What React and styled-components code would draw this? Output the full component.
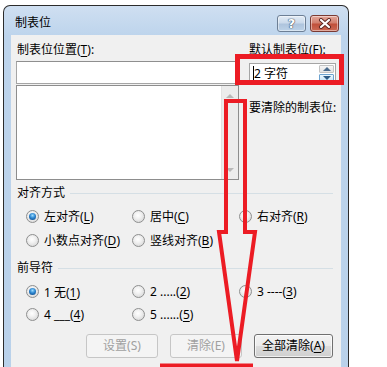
import React from "react";
import styled, { createGlobalStyle } from "styled-components";

const Global = createGlobalStyle`
  html, body { margin: 0; padding: 0; background: #fff; }
  body {
    font-family: "Noto Sans", "Noto Sans CJK SC", "Microsoft YaHei", sans-serif;
    font-size: 12px;
    color: #000;
    overflow: hidden;
  }
`;

const Page = styled.div`
  position: relative;
  width: 387px;
  height: 367px;
  overflow: hidden;
  box-sizing: border-box;
  padding: 5px 0 0 3px;
`;

const Window = styled.div`
  width: 346px;
  height: 400px;
  box-sizing: border-box;
  border: 1px solid #2c2c2c;
  border-bottom: none;
  border-radius: 7px 7px 0 0;
  background: linear-gradient(180deg, #cfdff1 0px, #bdd4ec 30px, #b9d1ea 100%);
  display: flex;
  flex-direction: column;
`;

const TitleBar = styled.div`
  height: 29px;
  box-sizing: border-box;
  padding: 5px 9px 0 11px;
  display: flex;
  align-items: center;
  flex: none;
`;

const Caption = styled.div`
  flex: 1;
  font-size: 12px;
  line-height: 16px;
  color: #000;
`;

const CaptionButtons = styled.div`
  display: flex;
  gap: 4px;
  margin-top: 1px;
`;

const CapButton = styled.div`
  width: 29px;
  height: 17px;
  box-sizing: border-box;
  border-radius: 3px;
  border: 1px solid ${(p) => (p.$close ? "#7a3a33" : "#6d7f95")};
  background: ${(p) =>
    p.$close
      ? "linear-gradient(180deg, #e4a79b 0%, #d3806f 45%, #c1503b 55%, #cc6a55 100%)"
      : "linear-gradient(180deg, #e3ecf6 0%, #cbdaeb 45%, #aec4dd 55%, #bcd2e8 100%)"};
  box-shadow: inset 0 0 0 1px rgba(255, 255, 255, 0.45);
  display: flex;
  align-items: center;
  justify-content: center;
`;

const HelpGlyph = styled.span`
  font-family: "DejaVu Sans", sans-serif;
  font-weight: bold;
  font-size: 13px;
  line-height: 13px;
  color: #fff;
  text-shadow: 0 0 1px #3c4d63, 0 0 1px #3c4d63, 0 0 1px #3c4d63;
`;

const Client = styled.div`
  flex: 1;
  margin: 0 7px;
  background: #f0f0f0;
  box-sizing: border-box;
  padding: 6px 8px 0 5px;
  display: flex;
  flex-direction: column;
`;

const TopGrid = styled.div`
  display: grid;
  grid-template-columns: 223px 1fr;
  grid-template-rows: 18px 23px 94px;
  column-gap: 10px;
  row-gap: 2px;
`;

const Label = styled.div`
  line-height: 18px;
  padding-left: ${(p) => p.$indent || 0}px;
  padding-top: ${(p) => p.$top || 0}px;
  white-space: nowrap;
`;

const Acc = styled.u`
  text-underline-offset: 2px;
`;

const TextBox = styled.div`
  border: 1px solid #a5a5a5;
  border-top-color: #8f8f8f;
  background: #fff;
`;

const ListBox = styled.div`
  margin-top: -1px;
  border: 1px solid #8d8d8d;
  background: #fff;
  display: flex;
  justify-content: flex-end;
`;

const ScrollBar = styled.div`
  width: 16px;
  background: #ececec;
  border-left: 1px solid #e2e2e2;
  display: flex;
  flex-direction: column;
  justify-content: space-between;
  align-items: center;
  padding: 8px 0 7px;
`;

const Tri = styled.span`
  width: 0;
  height: 0;
  border-left: 4px solid transparent;
  border-right: 4px solid transparent;
  ${(p) =>
    p.$down
      ? `border-top: 4px solid ${p.$c || "#b8b8b8"};`
      : `border-bottom: 4px solid ${p.$c || "#b8b8b8"};`}
`;

const Spin = styled.div`
  align-self: center;
  height: 21px;
  box-sizing: border-box;
  border: 1px solid #a5a5a5;
  background: #fff;
  display: flex;
  margin-top: 2px;
`;

const SpinText = styled.div`
  flex: 1;
  line-height: 19px;
  padding-left: 3px;
  display: flex;
  align-items: center;
  white-space: pre;
`;

const Caret = styled.span`
  width: 1px;
  height: 15px;
  background: #000;
`;

const SpinButtons = styled.div`
  width: 15px;
  display: flex;
  flex-direction: column;
  gap: 1px;
  padding: 1px 1px 1px 0;
`;

const SpinBtn = styled.div`
  flex: 1;
  border: 1px solid ${(p) => (p.$active ? "#6ca2cf" : "#c3c3c3")};
  background: ${(p) =>
    p.$active
      ? "linear-gradient(180deg, #eaf6fd, #c6e3f7)"
      : "linear-gradient(180deg, #f6f6f6, #e2e2e2)"};
  display: flex;
  align-items: center;
  justify-content: center;
  border-radius: 1px;
`;

const GroupHeader = styled.div`
  display: flex;
  align-items: center;
  line-height: 18px;
  margin-top: ${(p) => p.$top}px;
  padding-left: 1px;
  &::after {
    content: "";
    flex: 1;
    height: 1px;
    background: #d5dfe5;
    margin-left: 5px;
  }
`;

const RadioGrid = styled.div`
  display: grid;
  grid-template-columns: 106px 107px 1fr;
  grid-auto-rows: ${(p) => p.$row}px;
  padding-left: 10px;
  margin-top: ${(p) => p.$top}px;
`;

const RadioItem = styled.div`
  display: flex;
  align-items: center;
  gap: 5px;
  white-space: nowrap;
`;

const RadioDot = styled.span`
  width: 13px;
  height: 13px;
  box-sizing: border-box;
  border-radius: 50%;
  border: 1px solid #8e8f8f;
  background: radial-gradient(circle at 45% 40%, #ffffff 0, #f2f2f2 35%, #cfcfcf 100%);
  display: flex;
  align-items: center;
  justify-content: center;
  flex: none;
  &::after {
    content: "";
    width: 7px;
    height: 7px;
    border-radius: 50%;
    display: ${(p) => (p.$checked ? "block" : "none")};
    background: radial-gradient(circle at 50% 35%, #9cdcff 0, #2c86d0 45%, #0b3d7a 100%);
  }
`;

const ButtonRow = styled.div`
  display: flex;
  justify-content: flex-end;
  gap: 12px;
  margin-top: 8px;
`;

const Button = styled.div`
  width: ${(p) => p.$w}px;
  height: 24px;
  box-sizing: border-box;
  border-radius: 3px;
  border: 1px solid ${(p) => (p.$disabled ? "#c6c6c6" : "#707070")};
  background: ${(p) =>
    p.$disabled
      ? "#f4f4f4"
      : "linear-gradient(180deg, #f3f3f3 0%, #ebebeb 50%, #dddddd 51%, #cfcfcf 100%)"};
  color: ${(p) => (p.$disabled ? "#a0a0a0" : "#000")};
  box-shadow: ${(p) => (p.$disabled ? "none" : "inset 0 0 0 1px rgba(255,255,255,0.7)")};
  display: flex;
  align-items: center;
  justify-content: center;
  line-height: 16px;
`;

const Overlay = styled.svg`
  position: absolute;
  left: 0;
  top: 0;
  pointer-events: none;
`;

function Radio({ checked, children }) {
  return (
    <RadioItem>
      <RadioDot $checked={checked} />
      <span>{children}</span>
    </RadioItem>
  );
}

export default function App() {
  return (
    <>
      <Global />
      <Page>
        <Window>
          <TitleBar>
            <Caption>制表位</Caption>
            <CaptionButtons>
              <CapButton>
                <HelpGlyph>?</HelpGlyph>
              </CapButton>
              <CapButton $close>
                <svg width="14" height="11" viewBox="0 0 14 11">
                  <path d="M3 2 L11 9 M11 2 L3 9" stroke="#5a2520" strokeWidth="4" strokeLinecap="round" />
                  <path d="M3 2 L11 9 M11 2 L3 9" stroke="#fff" strokeWidth="2.2" strokeLinecap="round" />
                </svg>
              </CapButton>
            </CaptionButtons>
          </TitleBar>
          <Client>
            <TopGrid>
              <Label $indent={1}>
                制表位位置(<Acc>T</Acc>):
              </Label>
              <Label>
                默认制表位(<Acc>F</Acc>):
              </Label>
              <TextBox />
              <Spin>
                <SpinText>
                  <Caret />
                  {"2 字符"}
                </SpinText>
                <SpinButtons>
                  <SpinBtn>
                    <Tri $c="#4a6b8c" />
                  </SpinBtn>
                  <SpinBtn $active>
                    <Tri $down $c="#2d5a84" />
                  </SpinBtn>
                </SpinButtons>
              </Spin>
              <ListBox>
                <ScrollBar>
                  <Tri />
                  <Tri $down />
                </ScrollBar>
              </ListBox>
              <Label $top={13}>要清除的制表位:</Label>
            </TopGrid>

            <GroupHeader $top={4}>对齐方式</GroupHeader>
            <RadioGrid $row={24} $top={2}>
              <Radio checked>
                左对齐(<Acc>L</Acc>)
              </Radio>
              <Radio>
                居中(<Acc>C</Acc>)
              </Radio>
              <Radio>
                右对齐(<Acc>R</Acc>)
              </Radio>
              <Radio>
                小数点对齐(<Acc>D</Acc>)
              </Radio>
              <Radio>
                竖线对齐(<Acc>B</Acc>)
              </Radio>
            </RadioGrid>

            <GroupHeader $top={7}>前导符</GroupHeader>
            <RadioGrid $row={23} $top={3}>
              <Radio checked>
                1 无(<Acc>1</Acc>)
              </Radio>
              <Radio>
                2 .....(<Acc>2</Acc>)
              </Radio>
              <Radio>
                3 ----(<Acc>3</Acc>)
              </Radio>
              <Radio>
                4 ___(<Acc>4</Acc>)
              </Radio>
              <Radio>
                5 ......(<Acc>5</Acc>)
              </Radio>
            </RadioGrid>

            <ButtonRow>
              <Button $w={72} $disabled>
                设置(S)
              </Button>
              <Button $w={72} $disabled>
                清除(E)
              </Button>
              <Button $w={79}>
                全部清除(<Acc>A</Acc>)
              </Button>
            </ButtonRow>
          </Client>
        </Window>

        <Overlay width="387" height="367" viewBox="0 0 387 367">
          <rect x="237.5" y="56.5" width="104" height="26" fill="none" stroke="#ec1c24" strokeWidth="5" />
          <path
            d="M226 232 L226 101 L245 101 L245 232 L255 232 L237 361 L219 232 Z"
            fill="none"
            stroke="#ec1c24"
            strokeWidth="4"
            strokeLinejoin="miter"
          />
          <line x1="160" y1="365.5" x2="253" y2="365.5" stroke="#ec1c24" strokeWidth="4" />
        </Overlay>
      </Page>
    </>
  );
}
